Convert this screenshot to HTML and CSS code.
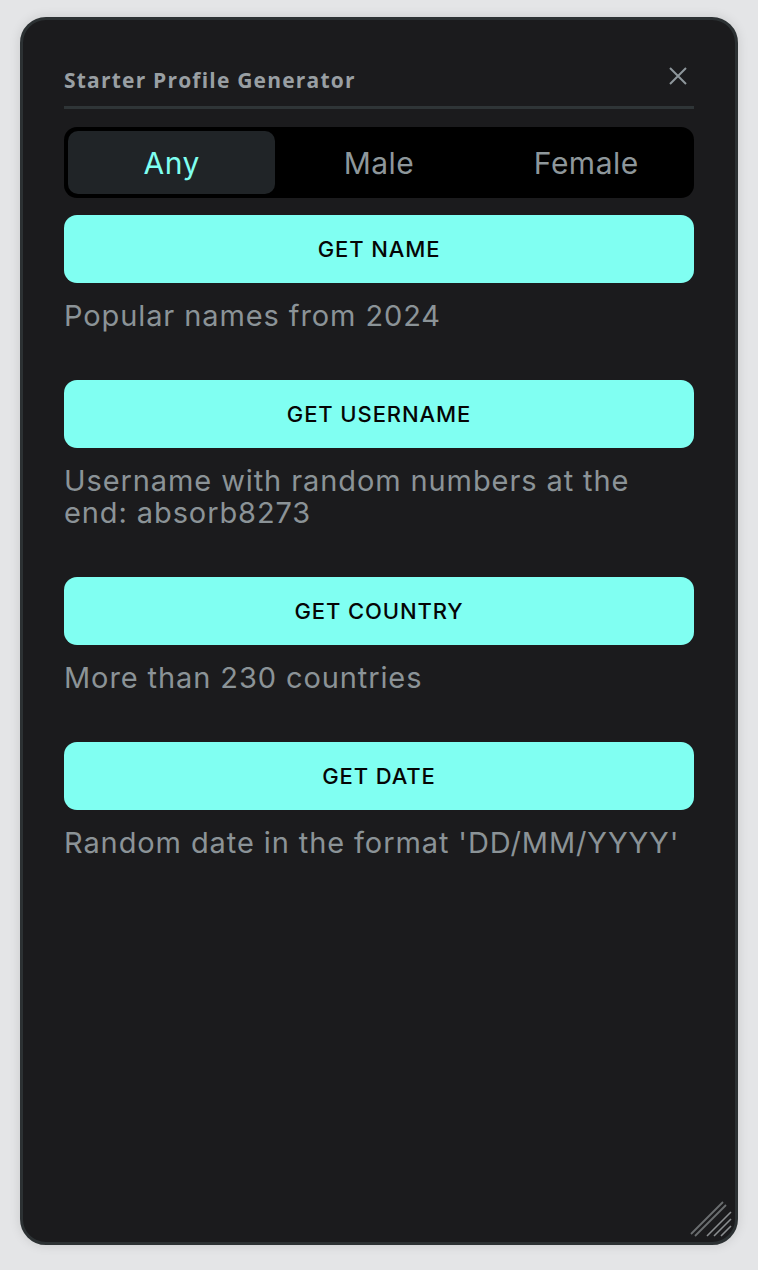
FILE: index.html
```html
<!DOCTYPE html>
<html lang="en">
<head>
<meta charset="utf-8">
<title>Starter Profile Generator</title>
<link rel="stylesheet" href="styles.css">
</head>
<body>
<div class="panel">
  <header class="header">
    <h1 class="title">Starter Profile Generator</h1>
    <button class="close" aria-label="Close">
      <svg width="20" height="20" viewBox="0 0 20 20"><path d="M2 2 L18 18 M18 2 L2 18" stroke="#8e979b" stroke-width="2" fill="none"/></svg>
    </button>
  </header>
  <div class="divider"></div>
  <div class="segmented">
    <div class="seg active">Any</div>
    <div class="seg">Male</div>
    <div class="seg">Female</div>
  </div>
  <div class="actions">
    <section class="item">
      <button class="btn">GET NAME</button>
      <p class="desc">Popular names from 2024</p>
    </section>
    <section class="item">
      <button class="btn">GET USERNAME</button>
      <p class="desc">Username with random numbers at the end: absorb8273</p>
    </section>
    <section class="item">
      <button class="btn">GET COUNTRY</button>
      <p class="desc">More than 230 countries</p>
    </section>
    <section class="item">
      <button class="btn">GET DATE</button>
      <p class="desc">Random date in the format 'DD/MM/YYYY'</p>
    </section>
  </div>
  <svg class="grip" width="46" height="46" viewBox="0 0 46 46">
    <path d="M4 40 L36 8 M8 42 L39 11" stroke="#6b6e70" stroke-width="1.8" fill="none"/>
    <path d="M20 42 L44 18 M27 42 L44 25 M34 42 L44 32" stroke="#8a8d8f" stroke-width="1.6" fill="none"/>
  </svg>
</div>
</body>
</html>
```

FILE: styles.css
```css
* { box-sizing: border-box; }
html, body { margin: 0; padding: 0; }
body {
  background: #e4e5e7;
  width: 758px;
  height: 1270px;
  padding: 17px 20px 25px 20px;
  font-family: Inter, "Liberation Sans", sans-serif;
}
.panel {
  position: relative;
  width: 718px;
  height: 1228px;
  background: #1b1b1d;
  border: 3px solid #2c3133;
  border-radius: 26px;
  padding: 46px 41px 0 41px;
  box-shadow: 0 0 12px rgba(0,0,0,0.12);
}
.header {
  display: flex;
  justify-content: space-between;
  align-items: center;
  height: 26px;
}
.title {
  margin: 0;
  font-family: "Open Sans", sans-serif;
  font-weight: 700;
  font-size: 21px;
  letter-spacing: 1.2px;
  color: #999fa3;
  line-height: 26px;
  position: relative;
  top: 1px;
}
.close {
  align-self: flex-start;
  background: none;
  border: 0;
  padding: 0;
  margin-right: 6px;
  width: 20px;
  height: 20px;
  display: flex;
}
.divider {
  margin-top: 14px;
  height: 3px;
  background: #2f3537;
}
.segmented {
  margin-top: 18px;
  height: 71px;
  background: #000;
  border-radius: 13px;
  padding: 4px;
  display: grid;
  grid-template-columns: 1fr 1fr 1fr;
}
.seg {
  display: flex;
  align-items: center;
  justify-content: center;
  font-size: 30px;
  letter-spacing: 0.5px;
  color: #8e979b;
  border-radius: 10px;
}
.seg.active {
  background: #202427;
  color: #7ffff0;
}
.actions {
  margin-top: 17px;
  display: flex;
  flex-direction: column;
}
.item { display: flex; flex-direction: column; }
.btn {
  height: 68px;
  width: 100%;
  border: 0;
  border-radius: 13px;
  background: #80fff2;
  color: #050505;
  font-family: Inter, sans-serif;
  font-weight: 500;
  font-size: 22px;
  letter-spacing: 0.9px;
}
.desc {
  margin: 17px 0 48px 0;
  font-size: 29px;
  line-height: 32px;
  color: #8b9397;
  letter-spacing: 0.9px;
}
.grip {
  position: absolute;
  right: 2px;
  bottom: 2px;
}
```
